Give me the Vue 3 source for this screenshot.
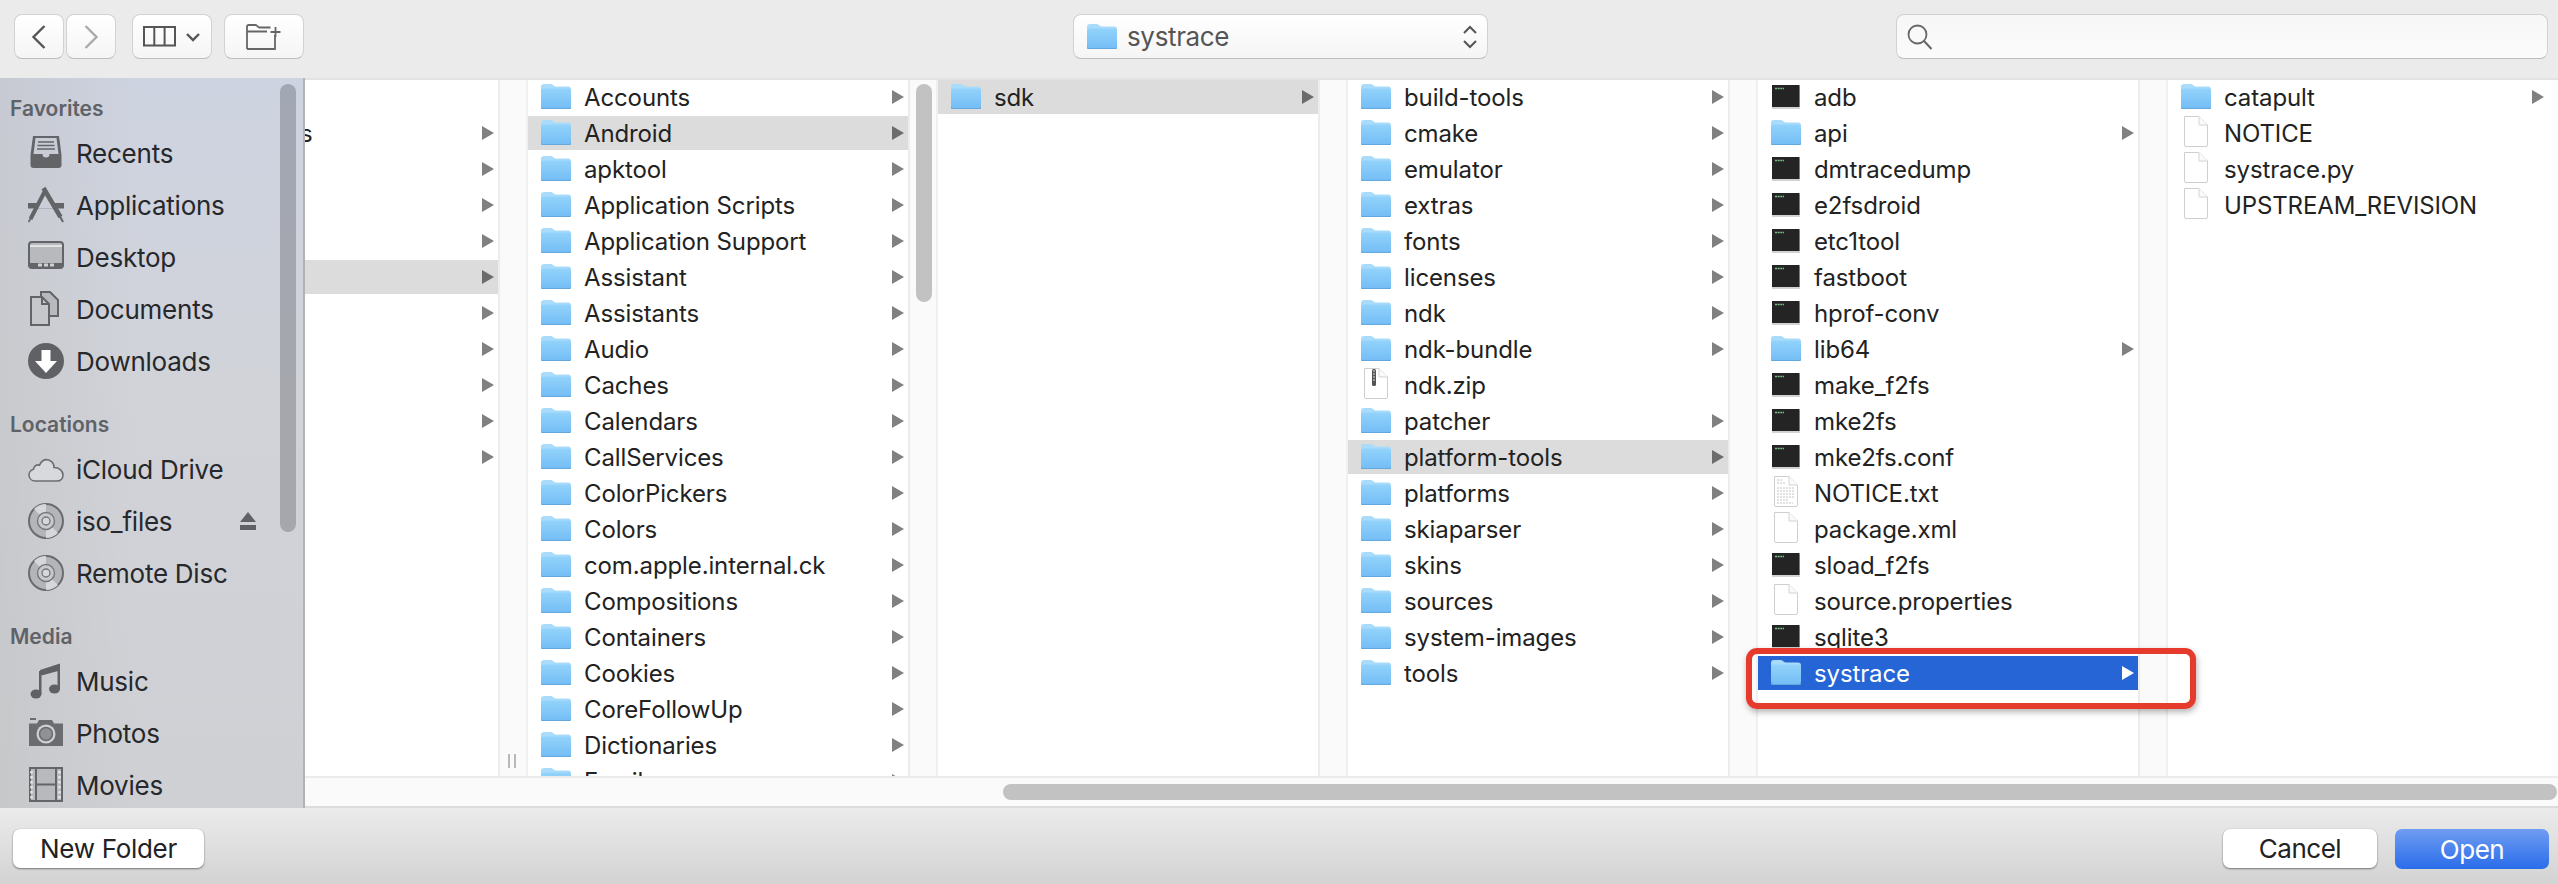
<script setup>
const col2 = ['Accounts','Android','apktool','Application Scripts','Application Support','Assistant','Assistants','Audio','Caches','Calendars','CallServices','ColorPickers','Colors','com.apple.internal.ck','Compositions','Containers','Cookies','CoreFollowUp','Dictionaries','Family'].map((name, i) => ({ name, icon: 'folder', more: true, active: i === 1 }))
const col3 = [{ name: 'sdk', icon: 'folder', more: true, active: true }]
const col4 = ['build-tools','cmake','emulator','extras','fonts','licenses','ndk','ndk-bundle','ndk.zip','patcher','platform-tools','platforms','skiaparser','skins','sources','system-images','tools'].map(name => ({
  name,
  icon: name === 'ndk.zip' ? 'zip' : 'folder',
  more: name !== 'ndk.zip',
  active: name === 'platform-tools'
}))
const col5 = [
  ['adb','exec'],['api','folder'],['dmtracedump','exec'],['e2fsdroid','exec'],['etc1tool','exec'],['fastboot','exec'],['hprof-conv','exec'],['lib64','folder'],['make_f2fs','exec'],['mke2fs','exec'],['mke2fs.conf','exec'],['NOTICE.txt','txt'],['package.xml','doc'],['sload_f2fs','exec'],['source.properties','doc'],['sqlite3','exec'],['systrace','folder']
].map(([name, icon]) => ({ name, icon, more: icon === 'folder', selected: name === 'systrace' }))
const col6 = [
  { name: 'catapult', icon: 'folder', more: true },
  { name: 'NOTICE', icon: 'doc' },
  { name: 'systrace.py', icon: 'doc' },
  { name: 'UPSTREAM_REVISION', icon: 'doc' }
]
const columns = [
  { items: col2, scroll: true },
  { items: col3 },
  { items: col4 },
  { items: col5 },
  { items: col6, last: true }
]
const firstRows = Array.from({ length: 11 }, (_, i) => i)
const sections = [
  { title: 'Favorites', items: [['Recents','recents'],['Applications','apps'],['Desktop','desktop'],['Documents','documents'],['Downloads','downloads']] },
  { title: 'Locations', items: [['iCloud Drive','cloud'],['iso_files','disc',true],['Remote Disc','disc']] },
  { title: 'Media', items: [['Music','music'],['Photos','photos'],['Movies','movies']] }
]
</script>

<template>
  <div class="window">
    <svg class="defs" width="0" height="0" aria-hidden="true">
      <defs>
        <linearGradient id="fg" x1="0" y1="0" x2="0" y2="1">
          <stop offset="0" stop-color="#93d3fb" />
          <stop offset="1" stop-color="#74bef6" />
        </linearGradient>
        <symbol id="i-folder" viewBox="0 0 30 34">
          <path d="M0 7a3 3 0 0 1 3-3h7c2 0 2.500 2.500 4.500 2.500H27a3 3 0 0 1 3 3V12H0z" fill="#a9dbfb" />
          <rect x="0" y="8.500" width="30" height="19.500" rx="2" fill="url(#fg)" />
          <path d="M0 26.500a2 2 0 0 0 2 2h26a2 2 0 0 0 2-2" fill="none" stroke="#62a8dd" stroke-width="1.200" />
        </symbol>
        <symbol id="i-exec" viewBox="0 0 30 34">
          <rect x="1" y="6.500" width="28" height="22.500" fill="#b5b5b5" opacity=".6" />
          <rect x="1" y="5" width="27.500" height="22" fill="#242424" />
          <path d="M4 8.500h9" stroke="#7dbb80" stroke-width="1.500" stroke-dasharray="2 .6" />
        </symbol>
        <symbol id="i-doc" viewBox="0 0 30 34">
          <path d="M3.500.500H18L26.500 9v20a1.500 1.500 0 0 1-1.500 1.500H5A1.500 1.500 0 0 1 3.500 29z" fill="#fff" stroke="#cfcfcf" />
          <path d="M18 .500V9h8.500" fill="#fafafa" stroke="#d4d4d4" />
        </symbol>
      </defs>
    </svg>

    <header class="toolbar">
      <div class="nav">
        <button class="tbtn nav-btn">
          <svg width="16" height="26" viewBox="0 0 16 26"><path d="M13.500 2 2.500 13l11 11" fill="none" stroke="#555" stroke-width="2.400" /></svg>
        </button>
        <button class="tbtn nav-btn">
          <svg width="16" height="26" viewBox="0 0 16 26"><path d="M2.500 2l11 11-11 11" fill="none" stroke="#aaa" stroke-width="2.400" /></svg>
        </button>
      </div>
      <button class="tbtn view-btn">
        <svg width="34" height="21" viewBox="0 0 34 21"><path d="M1 1h31v18.500H1zM11.300 1v18.500M21.600 1v18.500" fill="none" stroke="#555" stroke-width="2" /></svg>
        <svg width="16" height="10" viewBox="0 0 16 10"><path d="M2 2l6 6 6-6" fill="none" stroke="#555" stroke-width="2.400" /></svg>
      </button>
      <button class="tbtn add-btn">
        <svg width="36" height="26" viewBox="0 0 36 26"><path d="M1 25V2.500A1.500 1.500 0 0 1 2.500 1h7c2 0 2 2.500 4 2.500h11M1 7.500h20M29 11v14H1" fill="none" stroke="#666" stroke-width="1.800" /><path d="M29.500 3v10M24.500 8h10" fill="none" stroke="#666" stroke-width="1.800" /></svg>
      </button>
      <div class="tbtn path">
        <svg class="path-icon" width="30" height="34"><use href="#i-folder" /></svg>
        <span class="path-name">systrace</span>
        <svg class="updown" width="16" height="26" viewBox="0 0 16 26"><path d="M2 9l6-6 6 6M2 17l6 6 6-6" fill="none" stroke="#555" stroke-width="2" /></svg>
      </div>
      <div class="search">
        <svg width="26" height="26" viewBox="0 0 26 26"><circle cx="10.500" cy="10.500" r="9" fill="none" stroke="#666" stroke-width="1.800" /><path d="M17 17l7.500 8" fill="none" stroke="#666" stroke-width="2" /></svg>
      </div>
    </header>

    <div class="main">
      <aside class="sidebar">
        <div class="side-thumb"></div>
        <section v-for="s in sections" :key="s.title" class="section">
          <h3 class="side-title">{{ s.title }}</h3>
          <div v-for="it in s.items" :key="it[0]" class="side-row">
            <svg class="side-icon" width="36" height="36" viewBox="0 0 36 36">
              <g v-if="it[1] === 'recents'">
                <path d="M5 1h26l2.500 19v10a3 3 0 0 1-3 3h-25a3 3 0 0 1-3-3V20z" fill="#626468" />
                <path d="M7.500 3h21l2 16h-9a3.500 3.500 0 0 1-7 0h-9z" fill="#c9ccd6" />
                <path d="M10 7h16M9.500 10.500h17M9 14h18" stroke="#626468" stroke-width="1.600" />
              </g>
              <g v-else-if="it[1] === 'apps'" fill="none" stroke="#626468">
                <path d="M0 16h36v5.500H0z" fill="#626468" stroke="none" />
                <path d="M12 16h12l2.500 5.500H9.500z" fill="#cbced8" stroke="none" />
                <path d="M17.500 3 2.500 32" stroke-width="4" />
                <path d="M15.500 1 32.500 30" stroke-width="4.600" />
                <path d="M31.500 28.500 35 35" stroke-width="2" />
                <path d="M3 31 .5 35" stroke-width="1.600" />
              </g>
              <g v-else-if="it[1] === 'desktop'">
                <rect x="1" y="3" width="34" height="26" rx="3" fill="#b7b9bd" stroke="#626468" stroke-width="2" />
                <path d="M2 7h32" stroke="#f2f2f2" stroke-width="1.500" />
                <path d="M2 24h32v3a1 1 0 0 1-1 1H3a1 1 0 0 1-1-1z" fill="#626468" />
                <path d="M10 24.500h4v3h-4zM16 24.500h4v3h-4zM22 24.500h4v3h-4z" fill="#cfd0d4" />
              </g>
              <g v-else-if="it[1] === 'documents'">
                <path d="M13 5V1h9l8 8v16h-8" fill="#b7b9bd" stroke="#626468" stroke-width="2" />
                <path d="M3 11V6h11l7 7v21H3z" fill="#c5c7cb" stroke="#626468" stroke-width="2" />
                <path d="M14 6v7h7" fill="none" stroke="#626468" stroke-width="2" />
              </g>
              <g v-else-if="it[1] === 'downloads'">
                <circle cx="18" cy="18" r="18" fill="#5f6165" />
                <path d="M13.500 7h9v11H29L18 30 7 18h6.500z" fill="#fff" />
              </g>
              <path v-else-if="it[1] === 'cloud'" d="M7 30a6 6 0 0 1-1.500-11.800c.5-3.500 3.500-5 6-4C13.500 10 17 8 20.500 9c3.500 1 5.500 4 5.500 7.500 5 0 9 3 9 7.500 0 3.500-2.500 6-6 6z" fill="#d8d9dc" stroke="#6b6d71" stroke-width="1.600" />
              <g v-else-if="it[1] === 'disc'">
                <circle cx="18" cy="18" r="17" fill="#b4b5b9" stroke="#6a6b6f" stroke-width="2" />
                <path d="M18 18 6 6a17 17 0 0 1 12-5zM18 18l12 12a17 17 0 0 1-12 5z" fill="#d6d7da" />
                <circle cx="18" cy="18" r="8.500" fill="#c8c9cd" stroke="#77787c" stroke-width="1.400" />
                <circle cx="18" cy="18" r="4" fill="#d6d7da" stroke="#77787c" stroke-width="1.400" />
              </g>
              <g v-else-if="it[1] === 'music'" fill="#5f6165">
                <path d="M12 7 32 .5v7L13.500 12.500z" />
                <path d="M11 8h2.500v23h-2.500zM29.500 2H32v24h-2.500z" />
                <ellipse cx="8" cy="31" rx="5.500" ry="4.500" />
                <ellipse cx="26.500" cy="26" rx="5.500" ry="4.500" />
              </g>
              <g v-else-if="it[1] === 'photos'">
                <path d="M1 8.500h8l2-3.500h13l2 3.500h9V31H1z" fill="#6a6c70" />
                <path d="M2 3h6v2H2z" fill="#6a6c70" />
                <circle cx="18" cy="19" r="9.500" fill="#cfd0d4" />
                <circle cx="18" cy="19" r="6.500" fill="#8f9195" stroke="#6a6c70" stroke-width="1.500" />
              </g>
              <g v-else>
                <rect x="2" y="1" width="32" height="33" fill="#b7b9bd" stroke="#636569" stroke-width="2" />
                <path d="M8 1v33M28 1v33M8 17.500h20" stroke="#636569" stroke-width="2" />
                <path d="M3.500 4v28M31.500 4v28" stroke="#e4e5e8" stroke-width="2.500" stroke-dasharray="2.500 2.500" />
              </g>
            </svg>
            <span class="side-label">{{ it[0] }}</span>
            <svg v-if="it[2]" class="eject" width="16" height="18" viewBox="0 0 16 18"><path d="M8 0l8 10H0zM0 13h16v5H0z" fill="#5f6165" /></svg>
          </div>
        </section>
      </aside>

      <div class="browser">
        <div class="columns">
          <div class="col first">
            <div v-for="i in firstRows" :key="i" class="row" :class="{ active: i === 5 }">
              <span v-if="i === 1" class="cut">s</span>
              <svg v-if="i > 0" class="chev" width="12" height="14" viewBox="0 0 12 14"><path d="M0 0l12 7-12 7z" /></svg>
            </div>
          </div>
          <div class="gutter">
            <span class="grip"></span>
          </div>
          <template v-for="(c, ci) in columns" :key="ci">
            <div class="col" :class="{ last: c.last }">
              <div v-for="it in c.items" :key="it.name" class="row" :class="{ active: it.active, selected: it.selected }">
                <svg class="row-icon" width="30" height="34">
                  <use v-if="it.icon === 'folder'" href="#i-folder" />
                  <use v-else-if="it.icon === 'exec'" href="#i-exec" />
                  <template v-else>
                    <use href="#i-doc" />
                    <g v-if="it.icon === 'txt'" stroke="#c4c4c4" stroke-width="1">
                      <path d="M6 4h5M6 7h8M6 12h18M6 15h18M6 18h18M6 21h18M6 24h12M6 27h16" stroke-dasharray="2 1" />
                    </g>
                    <g v-if="it.icon === 'zip'">
                      <rect x="11" y="1" width="4" height="17" rx="1.500" fill="#555" />
                      <path d="M12 3h2M12 6h2M12 9h2M12 12h2" stroke="#ddd" stroke-width="1" />
                    </g>
                  </template>
                </svg>
                <span class="row-name">{{ it.name }}</span>
                <svg v-if="it.more" class="chev" width="12" height="14" viewBox="0 0 12 14"><path d="M0 0l12 7-12 7z" /></svg>
              </div>
            </div>
            <div v-if="!c.last" class="gutter">
              <span v-if="c.scroll" class="col-thumb"></span>
            </div>
          </template>
          <div class="mark"></div>
        </div>
        <div class="hscroll"><div class="hthumb"></div></div>
      </div>
    </div>

    <footer class="bottom">
      <button class="bbtn folder-btn">New Folder</button>
      <div class="actions">
        <button class="bbtn act">Cancel</button>
        <button class="bbtn act open">Open</button>
      </div>
    </footer>
  </div>
</template>

<style>
html, body { margin: 0; background: #ebebeb; }
</style>

<style scoped>
.window {
  width: 2558px;
  height: 884px;
  display: flex;
  flex-direction: column;
  overflow: hidden;
  font-family: Inter, "Liberation Sans", sans-serif;
  background: #ebebeb;
  color: #222;
}
.defs { position: absolute; }
button { font-family: inherit; padding: 0; margin: 0; }

.toolbar {
  height: 78px;
  flex: none;
  box-sizing: border-box;
  padding: 14px 10px 0 14px;
  display: flex;
  align-items: flex-start;
  background: #ebebeb;
}
.nav { display: flex; gap: 2px; }
.tbtn {
  box-sizing: border-box;
  height: 45px;
  border: 1px solid #d2d2d2;
  border-bottom-color: #bdbdbd;
  border-radius: 8px;
  background: linear-gradient(#ffffff, #f5f5f5);
  display: flex;
  align-items: center;
  justify-content: center;
}
.nav-btn { width: 50px; }
.view-btn { width: 80px; margin-left: 16px; gap: 8px; }
.add-btn { width: 80px; margin-left: 12px; }
.path {
  width: 415px;
  margin-left: 769px;
  justify-content: flex-start;
  padding-left: 13px;
}
.path-name {
  margin-left: 10px;
  font-size: 26px;
  letter-spacing: -0.35px;
  color: #555;
}
.updown { margin-left: auto; margin-right: 9px; }
.search {
  box-sizing: border-box;
  width: 652px;
  height: 45px;
  margin-left: 408px;
  border: 1px solid #d2d2d2;
  border-bottom-color: #bdbdbd;
  border-radius: 8px;
  background: linear-gradient(#f7f7f7, #fbfbfb);
  display: flex;
  align-items: center;
  padding-left: 10px;
}

.main { flex: none; height: 730px; display: flex; }

.sidebar {
  position: relative;
  flex: none;
  box-sizing: border-box;
  width: 305px;
  height: 730px;
  padding-top: 13px;
  overflow: hidden;
  border-right: 2px solid #b0b2b6;
  background:
    linear-gradient(90deg, rgba(188, 188, 188, .4), rgba(188, 188, 188, 0) 45%),
    linear-gradient(180deg, #ced3e1, #d1d3d9 42%, #cfd0d4);
}
.side-thumb {
  position: absolute;
  left: 280px;
  top: 6px;
  width: 16px;
  height: 448px;
  border-radius: 8px;
  background: linear-gradient(#a3a7b3, #a6a7ab);
}
.section + .section { margin-top: 20px; }
.side-title {
  margin: 0;
  height: 36px;
  line-height: 36px;
  padding-left: 10px;
  font-size: 21px;
  font-weight: 600;
  color: #5f6267;
}
.side-row {
  height: 52px;
  display: flex;
  align-items: center;
}
.side-icon { margin-left: 28px; flex: none; }
.side-label {
  margin-left: 12px;
  font-size: 26px;
  letter-spacing: -0.25px;
  color: #26282c;
}
.eject { margin-left: auto; margin-right: 47px; }

.browser {
  flex: 1;
  min-width: 0;
  display: flex;
  flex-direction: column;
  border-top: 2px solid #e2e2e2;
  background: #fff;
}
.columns {
  position: relative;
  height: 696px;
  flex: none;
  display: flex;
  overflow: hidden;
}
.col { flex: none; width: 380px; }
.col.first { width: 193px; overflow: hidden; }
.col.last { flex: 1; }
.gutter {
  position: relative;
  flex: none;
  box-sizing: border-box;
  width: 30px;
  background: #fafafa;
  border-left: 2px solid #ececec;
  border-right: 2px solid #f0f0f0;
}
.grip {
  position: absolute;
  left: 8px;
  bottom: 8px;
  width: 8px;
  height: 14px;
  border-left: 2px solid #b8b8b8;
  border-right: 2px solid #b8b8b8;
  box-sizing: border-box;
}
.col-thumb {
  position: absolute;
  left: 6px;
  top: 4px;
  width: 16px;
  height: 218px;
  border-radius: 8px;
  background: #c2c2c2;
}
.row {
  position: relative;
  width: 380px;
  height: 34px;
  margin-bottom: 2px;
  display: flex;
  align-items: center;
  box-sizing: border-box;
  font-size: 24px;
  letter-spacing: -0.12px;
}
.col.first .row { width: 193px; }
.row.active { background: #dcdcdc; }
.row.selected { background: #2565d6; color: #fff; }
.row-icon { margin-left: 13px; flex: none; }
.row-name { margin-left: 13px; white-space: nowrap; color: inherit; }
.cut { margin-left: -5px; }
.chev { position: absolute; right: 4px; top: 10px; fill: #808080; }
.row.active .chev { fill: #6c6c6c; }
.row.selected .chev { fill: #fff; }
.mark {
  position: absolute;
  left: 1441px;
  top: 568px;
  width: 450px;
  height: 61px;
  box-sizing: border-box;
  border: 6px solid #e63a2c;
  border-radius: 11px;
  box-shadow: 1px 3px 6px rgba(0, 0, 0, .3);
}

.hscroll {
  flex: none;
  height: 32px;
  box-sizing: border-box;
  border-top: 2px solid #ebebeb;
  border-bottom: 2px solid #dcdcdc;
  background: #fafafa;
  display: flex;
  align-items: center;
  justify-content: flex-end;
  padding-right: 1px;
}
.hthumb {
  width: 1554px;
  height: 16px;
  border-radius: 8px;
  background: #c2c2c2;
}

.bottom {
  flex: 1;
  display: flex;
  align-items: flex-start;
  justify-content: space-between;
  padding: 21px 9px 0 13px;
  background: linear-gradient(#ebebeb, #d3d3d3);
}
.bbtn {
  box-sizing: border-box;
  height: 39px;
  border: none;
  border-radius: 7px;
  background: #fff;
  box-shadow: 0 1px 2px rgba(0, 0, 0, .45), 0 0 1px rgba(0, 0, 0, .2);
  font-size: 26px;
  letter-spacing: -0.5px;
  color: #222;
}
.folder-btn { width: 191px; letter-spacing: -0.3px; }
.actions { display: flex; gap: 18px; }
.act { width: 154px; }
.open {
  height: 40px;
  color: #fff;
  background: linear-gradient(#6f9df2, #2a6cea);
  box-shadow: none;
}
</style>
